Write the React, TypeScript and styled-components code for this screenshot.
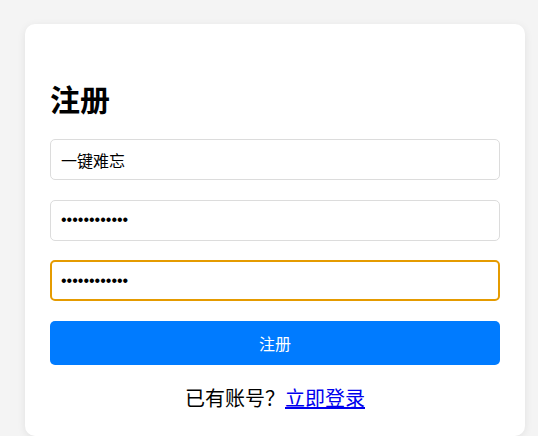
import React from "react";
import styled, { createGlobalStyle } from "styled-components";

const GlobalStyle = createGlobalStyle`
  html, body {
    margin: 0;
    padding: 0;
    background: #f4f4f4;
    font-family: "Noto Sans CJK SC", "Noto Sans", sans-serif;
  }
`;

const Page = styled.div`
  padding: 24px 13px 0 25px;
`;

const Card = styled.div`
  width: 500px;
  box-sizing: border-box;
  background: #fff;
  border-radius: 10px;
  box-shadow: 0 2px 8px rgba(0, 0, 0, 0.08);
  padding: 0 25px 24px;
  display: flex;
  flex-direction: column;
`;

const Title = styled.h1`
  margin: 58px 0 25px;
  font-size: 30px;
  line-height: 32px;
  font-weight: 700;
  color: #000;
`;

const Form = styled.form`
  display: flex;
  flex-direction: column;
  gap: 19.5px;
`;

const Input = styled.input<{ $focused?: boolean }>`
  height: 41px;
  box-sizing: border-box;
  border: ${(p) => (p.$focused ? "2px solid #e59b00" : "1px solid #dcdcdc")};
  padding: 0 10px 0 ${(p) => (p.$focused ? "9px" : "10px")};
  border-radius: 5px;
  font-family: ${(p) =>
    p.type === "password"
      ? '"Liberation Sans", Arial, sans-serif'
      : '"Noto Sans CJK SC", "Noto Sans", sans-serif'};
  font-size: 16px;
  color: #000;
  outline: none;
  background: #fff;
`;

const Submit = styled.button`
  margin-top: 0.5px;
  height: 44px;
  border: none;
  border-radius: 5px;
  background: #007bff;
  color: #fff;
  font-family: "Noto Sans CJK SC", "Noto Sans", sans-serif;
  font-size: 16px;
  cursor: pointer;
`;

const Footer = styled.p`
  margin: 19px 0 0;
  text-align: center;
  font-size: 20px;
  line-height: 28px;
  color: #000;
`;

const Link = styled.a`
  color: #0000ee;
  text-decoration: underline;
`;

export default function App() {
  return (
    <>
      <GlobalStyle />
      <Page>
        <Card>
          <Title>注册</Title>
          <Form onSubmit={(e) => e.preventDefault()}>
            <Input type="text" defaultValue="一键难忘" />
            <Input type="password" defaultValue="123456789012" />
            <Input type="password" defaultValue="123456789012" $focused />
            <Submit type="submit">注册</Submit>
          </Form>
          <Footer>
            已有账号？<Link href="#">立即登录</Link>
          </Footer>
        </Card>
      </Page>
    </>
  );
}
